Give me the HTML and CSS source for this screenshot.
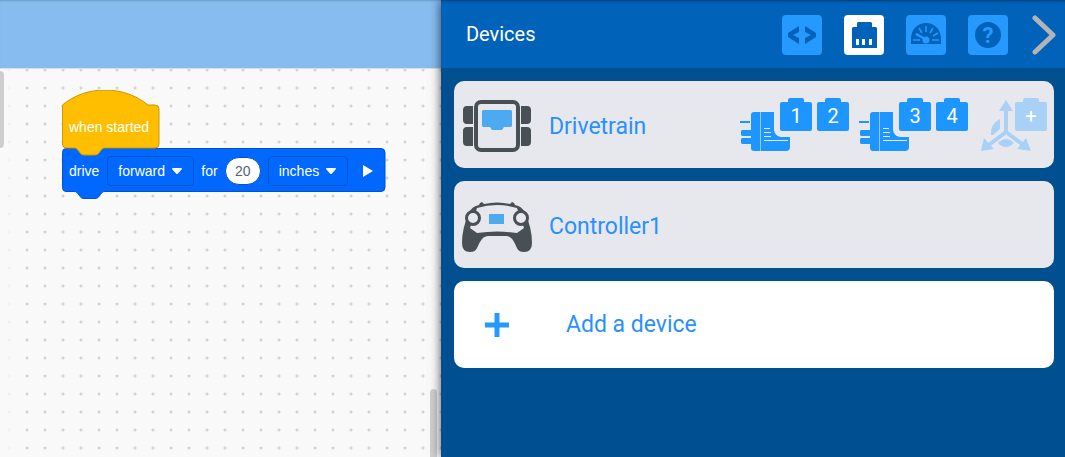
FILE: index.html
```html
<!DOCTYPE html>
<html lang="en">

<head>
    <meta charset="UTF-8">
    <meta name="viewport" content="width=device-width, initial-scale=1.0">
    <title>Devices</title>
    <link rel="stylesheet" href="styles.css">
</head>

<body>
    <!-- shapes used more than once -->
    <svg class="sprite" aria-hidden="true">
        <symbol id="motor" viewBox="0 0 51 39">
            <path d="M0 9h10v2H0zM2 18h10v6H2l-1-1v-4zM2 26h10v6H2l-1-1v-4z" />
            <path d="M14 0h6v39h-6q-3 0-3-3V3q0-3 3-3z" />
            <path d="M21 0h13v18q1 6 7 7h9v10q0 4-4 4H21z" />
            <path d="M20 0h1v39h-1z" opacity=".4" />
            <path d="M24 16.500h6M24 20.500h7M24 24.500h7M24 28.500h24" stroke="#e7e8ed" />
        </symbol>
        <symbol id="arrow" viewBox="0 0 10 6">
            <path d="M1 0h8q1 0 1 1L6 5.500q-1 1-2 0L0 1q0-1 1-1z" fill="#fff" />
        </symbol>
    </svg>

    <main class="editor">
        <div class="topbar"></div>
        <div class="workspace">
            <div class="scroll-left"></div>
            <div class="scroll-right"></div>
            <div class="stack">
                <div class="block hat">
                    <svg class="shape" width="98" height="66" viewBox="0 0 98 66">
                        <path d="M.5 15C24-5 62-5 86 15h7q4 0 4 4v35q0 4-4 4H43q-2 0-3 1l-4 5q-1 1-3 1H22q-2 0-3-1l-4-5q-1-1-3-1H4q-3.500 0-3.500-4z" fill="#ffbf00" stroke="#cc9900" />
                    </svg>
                    <span>when started</span>
                </div>
                <div class="block drive">
                    <svg class="shape" width="324" height="52" viewBox="0 0 324 52">
                        <path d="M4 .5h315q4 0 4 4v35q0 4-4 4H43q-2 0-3 1l-4 5q-1 1-3 1H22q-2 0-3-1l-4-5q-1-1-3-1H4q-3.500 0-3.500-4v-35q0-4 3.500-4z" fill="#0068ff" stroke="#0053cc" />
                    </svg>
                    <label for="direction">drive</label>
                    <div class="drop">
                        <select id="direction">
                            <option>forward</option>
                            <option>reverse</option>
                        </select>
                        <svg width="10" height="6"><use href="#arrow" /></svg>
                    </div>
                    <label for="distance">for</label>
                    <input id="distance" type="text" value="20">
                    <div class="drop unit">
                        <select aria-label="Unit">
                            <option>inches</option>
                            <option>mm</option>
                        </select>
                        <svg width="10" height="6"><use href="#arrow" /></svg>
                    </div>
                    <button class="expand" aria-label="Expand">
                        <svg width="10" height="12" viewBox="0 0 10 12"><path d="M0 0l10 6-10 6z" fill="#fff" /></svg>
                    </button>
                </div>
            </div>
        </div>
    </main>

    <aside class="panel">
        <header class="panel-header">
            <h1>Devices</h1>
            <nav class="tabs">
                <button class="tab" aria-label="Code">
                    <svg viewBox="0 0 40 40"><path d="M17 11v6l-6 3 6 3v6L6 22v-4zM23 11v6l6 3-6 3v6l11-7v-4z" /></svg>
                </button>
                <button class="tab active" aria-label="Devices">
                    <svg viewBox="0 0 40 40">
                        <path d="M14 7h13l1 1v4h4l1 1v20H8V13l1-1h4V8z" />
                        <path d="M12 24h3v6h-3zM18 24h3v6h-3zM25 24h3v6h-3z" fill="#fff" />
                    </svg>
                </button>
                <button class="tab" aria-label="Monitor">
                    <svg viewBox="0 0 40 40">
                        <path d="M5 29v-5C5 14 12 8 20 8s15 6 15 16v5z" />
                        <g fill="none" stroke="#2699ff" stroke-width="1.500">
                            <path d="M7 25h7M26 25h7M20 11v6M13 13l3 5M27 13l-3 5M32 18l-5 3" />
                            <path d="M10 19l9 5" stroke-width="2.500" />
                        </g>
                        <circle cx="20" cy="25" r="3.500" fill="#2699ff" />
                    </svg>
                </button>
                <button class="tab" aria-label="Help">
                    <svg viewBox="0 0 40 40">
                        <circle cx="20" cy="20" r="13" />
                        <text x="20" y="28" class="question">?</text>
                    </svg>
                </button>
                <button class="collapse" aria-label="Close panel">
                    <svg width="24" height="40" viewBox="0 0 24 40"><path d="M3 3l18 17L3 37" fill="none" stroke="#b4b4b4" stroke-width="5" stroke-linecap="round" stroke-linejoin="round" /></svg>
                </button>
            </nav>
        </header>

        <section class="devices">
            <div class="card">
                <svg class="device-icon" viewBox="0 0 70 53">
                    <g fill="#485056">
                        <path d="M11 6v18H5q-4 0-4-4V10q0-4 4-4zM11 27v19H5q-4 0-4-4V31q0-4 4-4zM59 6v18h6q4 0 4-4V10q0-4-4-4zM59 27v19h6q4 0 4-4V31q0-4-4-4z" />
                    </g>
                    <rect x="14" y="2" width="42" height="48" rx="5" fill="none" stroke="#485056" stroke-width="4" />
                    <path d="M21 10h28l1 1v15l-1 1h-7l-2 3H30l-2-3h-7l-1-1V11z" fill="#4daaf0" />
                </svg>
                <h2>Drivetrain</h2>
                <div class="ports">
                    <div class="port-group">
                        <svg class="motor"><use href="#motor" /></svg>
                        <button class="port">1</button>
                        <button class="port">2</button>
                    </div>
                    <div class="port-group">
                        <svg class="motor"><use href="#motor" /></svg>
                        <button class="port">3</button>
                        <button class="port">4</button>
                    </div>
                    <div class="port-group sensor">
                        <svg class="axes" viewBox="0 0 51 54">
                            <path d="M25 6v28L5 49M25 34l20 15" fill="none" stroke="#a9d1f5" stroke-width="4" />
                            <path d="M25 2l7 11H18zM0 53l3-13 10 11zM50 53l-5-13-9 11z" />
                            <path d="M19 21v10l-7 6h-2q-1-11 9-16zM17 45q8-8 16 0-8 8-16 0z" />
                        </svg>
                        <button class="port" aria-label="Add sensor">+</button>
                    </div>
                </div>
            </div>

            <div class="card">
                <svg class="device-icon" viewBox="0 0 70 53">
                    <path d="M18 3l2-1 2 2q13-3 26 0l2-2 2 1 1 2q7 1 10 8 7 15 7 30 0 9-8 9c-7 0-7-5-10-10q-3-6-8-6H26q-5 0-8 6c-3 5-3 10-10 10q-8 0-8-9 0-15 7-30 3-7 10-8z" fill="#485056" />
                    <path d="M15 8q20-6 40 0l7 20-7 5q-20-3-40 0l-7-5z" fill="#e7e8ed" />
                    <g fill="#e7e8ed" stroke="#485056" stroke-width="3">
                        <circle cx="11" cy="18" r="6.500" />
                        <circle cx="59" cy="18" r="6.500" />
                    </g>
                    <path d="M27 14h15v10H27z" fill="#4daaf0" />
                </svg>
                <h2>Controller1</h2>
            </div>

            <button class="card add">
                <svg class="plus" viewBox="0 0 24 24"><path d="M9.500 0h5v9.500H24v5h-9.500V24h-5v-9.500H0v-5h9.500z" /></svg>
                <span>Add a device</span>
            </button>
        </section>
    </aside>
</body>

</html>
```
FILE: styles.css
```css
*{
    margin: 0;
    padding: 0;
    box-sizing: border-box;
}
body{
    display: grid;
    grid-template-columns: 41.4% 1fr;
    min-height: 100vh;
    font-family: Roboto, sans-serif;
    overflow: hidden;
}
button{
    border: none;
    background: none;
    font-family: inherit;
}
svg{
    display: block;
}
.sprite{
    position: absolute;
    width: 0;
    height: 0;
}

/* editor */
.editor{
    display: flex;
    flex-direction: column;
}
.topbar{
    height: 68px;
    background-color: #87bcf0;
    box-shadow: inset 0 2px 2px -1px #6d9bc8;
}
.workspace{
    position: relative;
    flex: 1;
    border-top: 1px solid #dddddd;
    background-color: #f9f9f9;
    background-image: linear-gradient(to right, #f9f9f9cc 12px, transparent 12px), radial-gradient(circle, #d4d4d4 1px, transparent 2px);
    background-size: 100% 100%, 18px 18px;
    background-position: 0 0, 0 -8px;
}
.scroll-left, .scroll-right{
    position: absolute;
    background-color: #cecece;
}
.scroll-left{
    left: 0;
    top: 2px;
    width: 4px;
    height: 77px;
    border-radius: 0 4px 4px 0;
}
.scroll-right{
    right: 4px;
    bottom: 0;
    width: 7px;
    height: 68px;
    border-radius: 4px 4px 0 0;
}
.stack{
    position: absolute;
    left: 62px;
    top: 21px;
    font-family: "Liberation Sans", Arial, sans-serif;
    font-size: 14px;
    color: #fff;
}
.block{
    position: relative;
    display: flex;
    align-items: center;
    padding: 0 7px;
}
.shape{
    position: absolute;
    left: 0;
    top: 0;
    z-index: -1;
}
.hat{
    z-index: 1;
    height: 58px;
    padding-top: 16px;
}
.drive{
    z-index: 0;
    width: 324px;
    height: 44px;
    padding-top: 1px;
}
.drop{
    display: flex;
    align-items: center;
    position: relative;
    width: 87px;
    height: 30px;
    margin: 0 7px 0 8px;
    border: 1px solid #0053cc;
    border-radius: 4px;
}
.drop svg{
    position: absolute;
    right: 11px;
    pointer-events: none;
}
.drop select{
    appearance: none;
    width: 100%;
    height: 100%;
    padding: 0 10px;
    border: none;
    background: none;
    color: #fff;
    font: inherit;
}
.unit{
    width: 80px;
    margin: 0 7px;
}
#distance{
    width: 36px;
    height: 28px;
    margin-left: 7px;
    border: 1px solid #0053cc;
    border-radius: 14px;
    font: inherit;
    color: #575e75;
    text-align: center;
}
.expand{
    margin-left: 8px;
}

/* devices panel */
.panel{
    position: relative;
    background-color: #004f91;
    box-shadow: 0 0 10px #000000aa;
}
.panel-header{
    display: flex;
    align-items: center;
    justify-content: space-between;
    height: 68px;
    padding: 2px 9px 0 25px;
    background-color: #0062b8;
    box-shadow: inset 0 3px 3px -2px #003a70;
}
h1{
    padding-bottom: 2px;
    font-size: 20px;
    font-weight: 400;
    color: #fff;
}
.tabs{
    display: flex;
    align-items: center;
    gap: 22px;
}
.tab{
    width: 40px;
    height: 40px;
    border-radius: 4px;
    background-color: #2699ff;
    fill: #0062b8;
}
.collapse{
    padding-left: 2px;
}
.active{
    background-color: #fff;
}
.question{
    font-size: 22px;
    font-weight: 700;
    text-anchor: middle;
    fill: #2699ff;
}
.devices{
    display: flex;
    flex-direction: column;
    gap: 13px;
    padding: 13px 11px 13px 13px;
}
.card{
    display: flex;
    align-items: center;
    gap: 17px;
    height: 87px;
    padding: 3px 7px 0 8px;
    border-radius: 10px;
    background-color: #e7e8ed;
    color: #2990ff;
}
.device-icon{
    width: 70px;
    height: 53px;
}
h2, .add{
    font-size: 23px;
    font-weight: 400;
}
.add{
    gap: 57px;
    padding: 0 7px 0 31px;
    background-color: #fff;
}
.plus{
    width: 24px;
    height: 24px;
    fill: #2699ff;
}
.ports{
    display: flex;
    gap: 10px;
    margin-left: auto;
    padding-bottom: 3px;
}
.port-group{
    display: flex;
    gap: 5px;
    height: 54px;
    fill: #1e96ff;
}
.motor{
    width: 51px;
    height: 39px;
    margin: 14px -16px 0 0;
}
.axes{
    width: 51px;
    height: 54px;
    margin-right: -22px;
}
.port{
    position: relative;
    width: 32px;
    height: 29px;
    margin-top: 4px;
    border-radius: 2px;
    background-color: #1e96ff;
    font-size: 20px;
    line-height: 29px;
    color: #fff;
}
.port::before{
    content: "";
    position: absolute;
    left: 8px;
    top: -4px;
    width: 16px;
    height: 4px;
    border-radius: 2px 2px 0 0;
    background-color: inherit;
}
.sensor{
    margin-left: 3px;
    fill: #a9d1f5;
}
.sensor .port{
    background-color: #a9d1f5;
}
```
